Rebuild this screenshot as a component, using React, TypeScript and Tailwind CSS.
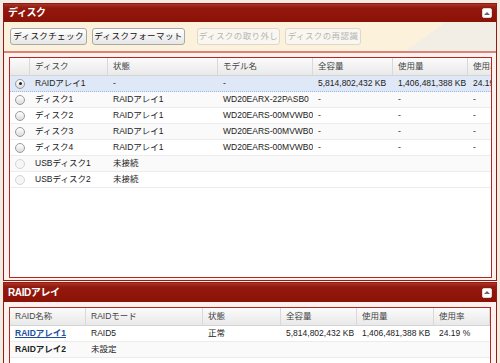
import React from 'react';

const font = "font-['Liberation_Sans','Noto_Sans_CJK_JP',sans-serif]";

const diskCols = [20, 78, 110, 95, 80, 75, 60];
const raidCols = [76, 117, 78, 76, 77, 56];

const disks = [
  { name: 'RAIDアレイ1', state: '-', model: '-', total: '5,814,802,432 KB', used: '1,406,481,388 KB', rate: '24.19 %', selected: true },
  { name: 'ディスク1', state: 'RAIDアレイ1', model: 'WD20EARX-22PASB0', total: '-', used: '-', rate: '-' },
  { name: 'ディスク2', state: 'RAIDアレイ1', model: 'WD20EARS-00MVWB0', total: '-', used: '-', rate: '-' },
  { name: 'ディスク3', state: 'RAIDアレイ1', model: 'WD20EARS-00MVWB0', total: '-', used: '-', rate: '-' },
  { name: 'ディスク4', state: 'RAIDアレイ1', model: 'WD20EARS-00MVWB0', total: '-', used: '-', rate: '-' },
  { name: 'USBディスク1', state: '未接続', model: '', total: '', used: '', rate: '', disabled: true },
  { name: 'USBディスク2', state: '未接続', model: '', total: '', used: '', rate: '', disabled: true },
];

const CollapseButton = () => (
  <div className="w-[10px] h-[10px] rounded-[2px] bg-white border border-[#e3d6d4] flex items-center justify-center">
    <div className="w-0 h-0 border-l-[3px] border-r-[3px] border-b-[3px] border-l-transparent border-r-transparent border-b-[#666]" />
  </div>
);

const TitleBar = ({ title, h }: { title: string; h: string }) => (
  <div className={`${h} shrink-0 flex items-center justify-between pl-[4px] pr-[4px] bg-[linear-gradient(#a6352a,#93190e_4px,#8b1207)]`}>
    <span className="text-white font-bold text-[10px] tracking-[-0.4px] leading-none">{title}</span>
    <CollapseButton />
  </div>
);

const Radio = ({ checked, disabled }: { checked?: boolean; disabled?: boolean }) => (
  <div
    className={`w-[10px] h-[10px] rounded-full border flex items-center justify-center ${
      disabled ? 'border-[#d4d4d4] bg-[#f6f6f6]' : 'border-[#9a9a9a] bg-[linear-gradient(#ffffff,#dcdcdc)]'
    }`}
  >
    {checked && <div className="w-[3px] h-[3px] rounded-full bg-[#222]" />}
  </div>
);

const HeaderCell = ({ w, children }: { w: number; children?: React.ReactNode }) => (
  <div
    className="shrink-0 h-full flex items-center pl-[5px] border-r border-[#d9d9d9] whitespace-nowrap overflow-hidden"
    style={{ width: w }}
  >
    {children}
  </div>
);

const Cell = ({ w, children, className = '' }: { w: number; children?: React.ReactNode; className?: string }) => (
  <div className={`shrink-0 h-full flex items-center pl-[5px] whitespace-nowrap overflow-hidden ${className}`} style={{ width: w }}>
    {children}
  </div>
);

const Button = ({ label, w, disabled }: { label: string; w: string; disabled?: boolean }) => (
  <div
    className={`${w} h-[17px] rounded-[3px] border flex items-center justify-center text-[8.5px] tracking-[0.4px] ${
      disabled
        ? 'border-[#ddd8cf] bg-[#faf7f0] text-[#b5b5b5]'
        : 'border-[#a9a9a9] bg-[linear-gradient(#ffffff,#e6e6e6)] text-[#111]'
    }`}
  >
    {label}
  </div>
);

export default function App() {
  return (
    <div className={`w-[500px] h-[363px] overflow-hidden bg-[#f3eee5] pl-[3px] pt-[3px] ${font}`}>
      <div className="w-[494px]">
        {/* Disk panel */}
        <div className="h-[278px] border border-[#951a10] flex flex-col">
          <TitleBar title="ディスク" h="h-[18px]" />
          <div className="h-[29px] shrink-0 flex items-center gap-[5px] pl-[6px] bg-[linear-gradient(144deg,#fcf2dc_83%,#f2ede5_83%)]">
            <Button label="ディスクチェック" w="w-[77px]" />
            <Button label="ディスクフォーマット" w="w-[93px]" />
            <div className="w-[2px]" />
            <Button label="ディスクの取り外し" w="w-[83px]" disabled />
            <Button label="ディスクの再認識" w="w-[76px]" disabled />
          </div>
          <div className="h-[2px] shrink-0 bg-[#d98479]" />
          <div className="flex-1 bg-[#fdf1ef] pl-[5px] pr-[4px] pt-[4px] pb-[2px]">
            <div className="h-[221px] border border-[#b3291f] bg-white overflow-hidden text-[8.5px] text-[#222]">
              <div className="h-[18px] flex border-b border-[#d4d4d4] bg-[linear-gradient(#fbfbfb,#e9e9e9)] text-[#444]">
                {['', 'ディスク', '状態', 'モデル名', '全容量', '使用量', '使用率'].map((t, i) => (
                  <HeaderCell key={i} w={diskCols[i]}>
                    {t}
                  </HeaderCell>
                ))}
              </div>
              {disks.map((d, i) => (
                <div
                  key={i}
                  className={`h-[16px] flex border-b ${
                    d.selected
                      ? 'bg-[#dfe8f6] border-dotted border-[#a3bae9]'
                      : i % 2 === 1
                      ? 'bg-[#fafafa] border-[#ececec]'
                      : 'bg-white border-[#ececec]'
                  }`}
                >
                  <div className="shrink-0 w-[20px] h-full flex items-center justify-center">
                    <Radio checked={d.selected} disabled={d.disabled} />
                  </div>
                  <Cell w={diskCols[1]}>{d.name}</Cell>
                  <Cell w={diskCols[2]}>{d.state}</Cell>
                  <Cell w={diskCols[3]}>{d.model}</Cell>
                  <Cell w={diskCols[4]}>{d.total}</Cell>
                  <Cell w={diskCols[5]}>{d.used}</Cell>
                  <Cell w={diskCols[6]}>{d.rate}</Cell>
                </div>
              ))}
            </div>
          </div>
        </div>

        {/* RAID panel */}
        <div className="mt-[1px] border border-[#951a10] flex flex-col">
          <TitleBar title="RAIDアレイ" h="h-[19px]" />
          <div className="bg-[#fdf1ef] pl-[5px] pr-[5px] pt-[5px]">
            <div className="border border-[#b3291f] bg-white text-[8.5px] text-[#222] h-[80px]">
              <div className="h-[18px] flex border-b border-[#d4d4d4] bg-[linear-gradient(#fbfbfb,#e9e9e9)] text-[#444]">
                {['RAID名称', 'RAIDモード', '状態', '全容量', '使用量', '使用率'].map((t, i) => (
                  <HeaderCell key={i} w={raidCols[i]}>
                    {t}
                  </HeaderCell>
                ))}
              </div>
              <div className="h-[16px] flex border-b border-[#ececec]">
                <Cell w={raidCols[0]} className="text-[#1c4f9c] font-bold underline">
                  RAIDアレイ1
                </Cell>
                <Cell w={raidCols[1]}>RAID5</Cell>
                <Cell w={raidCols[2]}>正常</Cell>
                <Cell w={raidCols[3]}>5,814,802,432 KB</Cell>
                <Cell w={raidCols[4]}>1,406,481,388 KB</Cell>
                <Cell w={raidCols[5]}>24.19 %</Cell>
              </div>
              <div className="h-[16px] flex border-b border-[#ececec] bg-[#fafafa]">
                <Cell w={raidCols[0]} className="font-bold">
                  RAIDアレイ2
                </Cell>
                <Cell w={raidCols[1]}>未設定</Cell>
              </div>
            </div>
          </div>
        </div>
      </div>
    </div>
  );
}
